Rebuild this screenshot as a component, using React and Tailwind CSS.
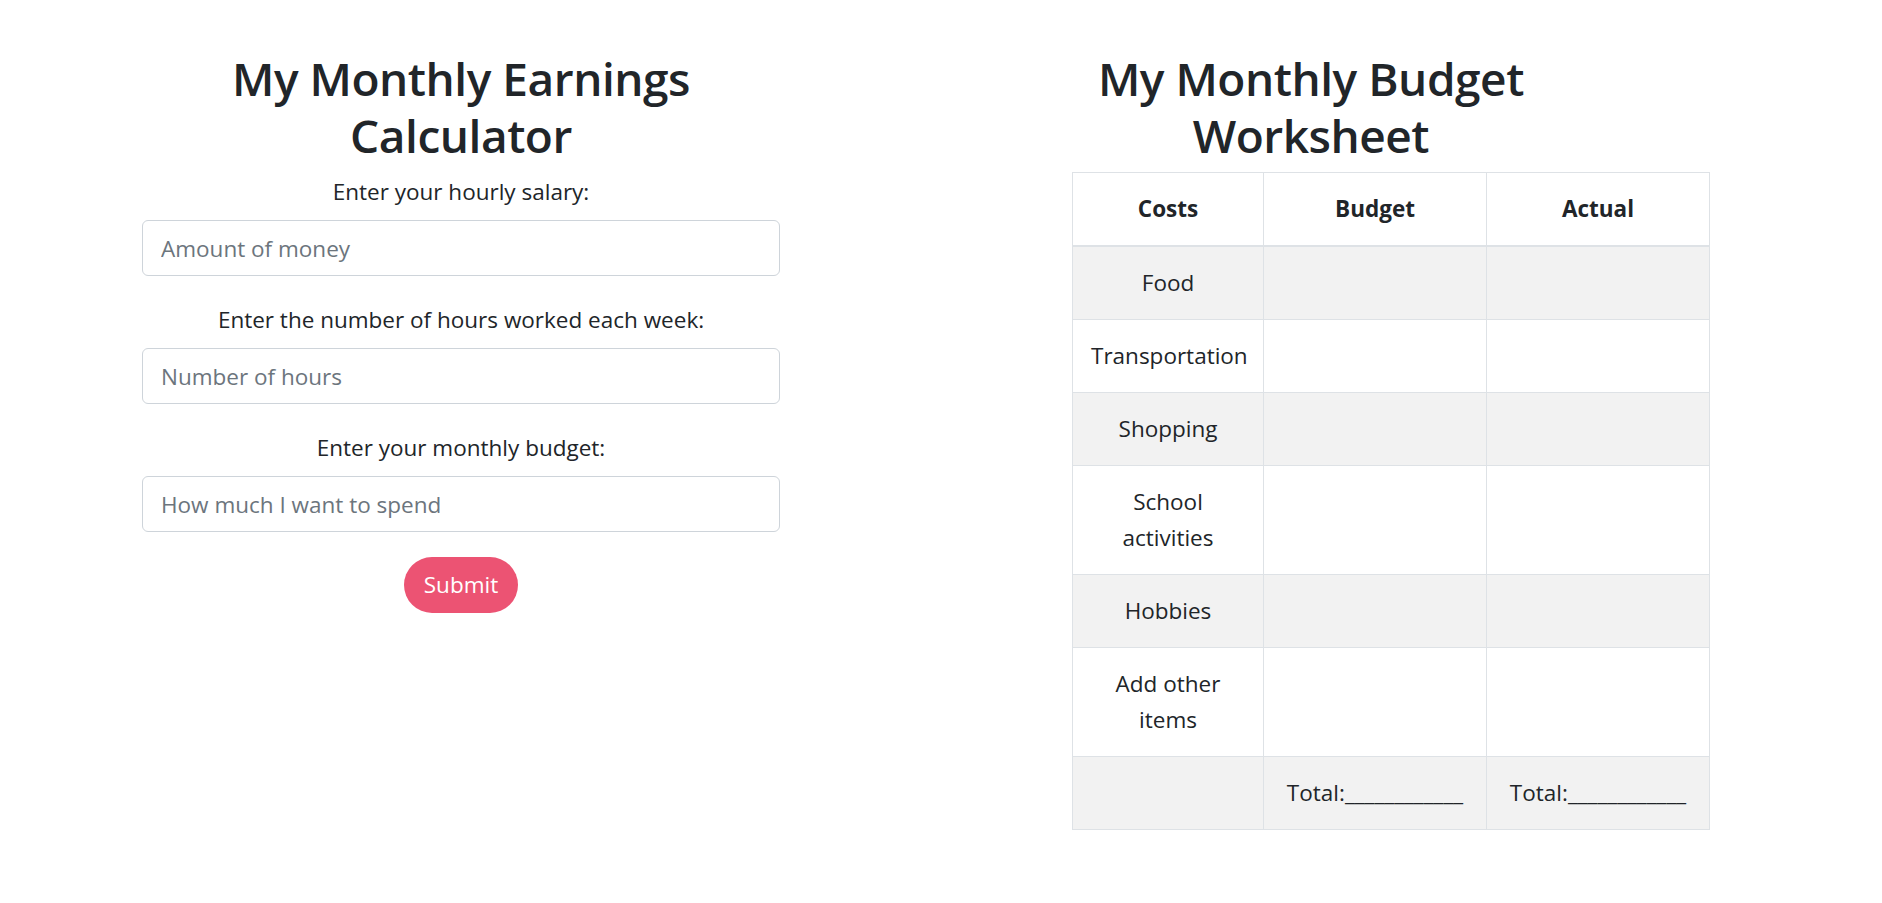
import { useState } from "react";

const font = { fontFamily: "'Open Sans', 'Noto Sans', sans-serif" };

const rows = [
  { label: "Food", striped: true },
  { label: "Transportation", striped: false },
  { label: "Shopping", striped: true },
  { label: ["School", "activities"], striped: false },
  { label: "Hobbies", striped: true },
  { label: ["Add other", "items"], striped: false },
];

function Field({ label, placeholder, value, onChange }) {
  return (
    <div className="flex flex-col">
      <label className="text-center text-[22.5px] leading-[36px]">{label}</label>
      <input
        type="text"
        value={value}
        onChange={(e) => onChange(e.target.value)}
        placeholder={placeholder}
        className="mt-[10px] h-[56px] w-full rounded-[6px] border border-[#ced4da] bg-white px-[18px] text-[22.5px] text-[#495057] placeholder:text-[#6c757d] focus:outline-none"
      />
    </div>
  );
}

export default function App() {
  const [salary, setSalary] = useState("");
  const [hours, setHours] = useState("");
  const [budget, setBudget] = useState("");

  const cell = "border border-[#dee2e6] px-[18px] py-[18px] text-center align-top";

  return (
    <div className="min-h-screen bg-white text-[#212529]" style={font}>
      <div className="flex items-start pt-[50px]">
        {/* calculator */}
        <div className="ml-[142px] w-[638px]">
          <h2 className="text-center text-[46px] font-semibold leading-[56.5px] tracking-[-0.01em]">
            My Monthly Earnings
            <br />
            Calculator
          </h2>
          <div className="mt-[11px] flex flex-col gap-[26px]">
            <Field
              label="Enter your hourly salary:"
              placeholder="Amount of money"
              value={salary}
              onChange={setSalary}
            />
            <Field
              label="Enter the number of hours worked each week:"
              placeholder="Number of hours"
              value={hours}
              onChange={setHours}
            />
            <Field
              label="Enter your monthly budget:"
              placeholder="How much I want to spend"
              value={budget}
              onChange={setBudget}
            />
          </div>
          <div className="mt-[25px] flex justify-center">
            <button className="h-[56px] rounded-full bg-[#ec5373] px-[20px] text-[22.5px] leading-[36px] text-white">
              Submit
            </button>
          </div>
        </div>

        {/* worksheet */}
        <div className="ml-[292px] w-[637px]">
          <h2 className="w-3/4 text-center text-[46px] font-semibold leading-[56.5px] tracking-[-0.01em]">
            My Monthly Budget
            <br />
            Worksheet
          </h2>
          <table className="mt-[9px] w-full table-fixed border-collapse text-[22.5px] leading-[36px]">
            <colgroup>
              <col className="w-[191px]" />
              <col className="w-[223px]" />
              <col className="w-[223px]" />
            </colgroup>
            <thead>
              <tr>
                <th className={cell + " border-b-2 font-bold"}>Costs</th>
                <th className={cell + " border-b-2 font-bold"}>Budget</th>
                <th className={cell + " border-b-2 font-bold"}>Actual</th>
              </tr>
            </thead>
            <tbody>
              {rows.map((r, i) => (
                <tr key={i} className={r.striped ? "bg-[#f2f2f2]" : "bg-white"}>
                  <td className={cell}>
                    {Array.isArray(r.label) ? (
                      <>
                        {r.label[0]}
                        <br />
                        {r.label[1]}
                      </>
                    ) : (
                      r.label
                    )}
                  </td>
                  <td className={cell}></td>
                  <td className={cell}></td>
                </tr>
              ))}
              <tr className="bg-[#f2f2f2]">
                <td className={cell}></td>
                <td className={cell + " whitespace-nowrap"}>Total:____________</td>
                <td className={cell + " whitespace-nowrap"}>Total:____________</td>
              </tr>
            </tbody>
          </table>
        </div>
      </div>
    </div>
  );
}
